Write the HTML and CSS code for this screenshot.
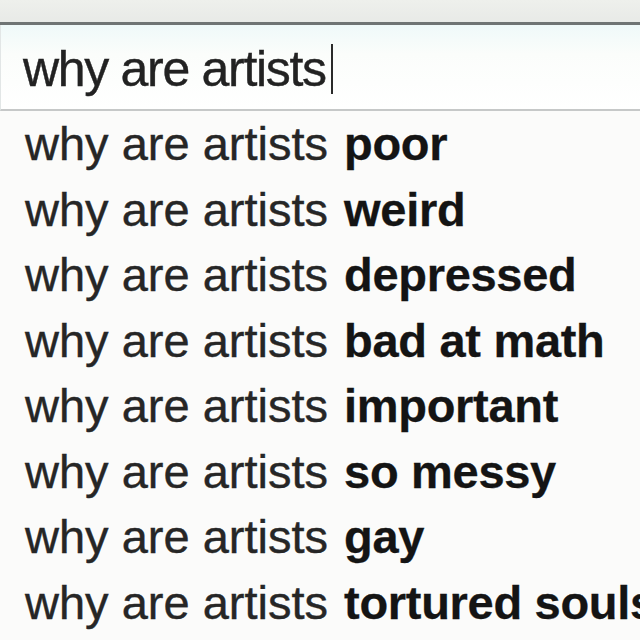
FILE: index.html
```html
<!DOCTYPE html>
<html lang="en">
<head>
    <meta charset="UTF-8">
    <meta name="viewport" content="width=device-width, initial-scale=1.0">
    <title>why are artists</title>
    <link rel="stylesheet" href="styles.css">
</head>
<body>
    <div class="toolbar"></div>

    <div class="search-box">
        <span class="query">why are artists</span><span class="caret"></span>
    </div>

    <ul class="suggestions">
        <li>why are artists <b>poor</b></li>
        <li>why are artists <b>weird</b></li>
        <li>why are artists <b>depressed</b></li>
        <li>why are artists <b>bad at math</b></li>
        <li>why are artists <b>important</b></li>
        <li>why are artists <b>so messy</b></li>
        <li>why are artists <b>gay</b></li>
        <li>why are artists <b>tortured souls</b></li>
    </ul>
</body>
</html>
```

FILE: styles.css
```css
body {
    margin: 0;
    width: 640px;
    height: 640px;
    overflow: hidden;
    background: #fbfbfa;
    font-family: "Liberation Sans", Arial, sans-serif;
    color: #252525;
}

.toolbar {
    height: 22px;
    background: linear-gradient(180deg, #eef0ec, #e8eae7);
    border-bottom: 3px solid #6f7474;
}

.search-box {
    height: 80px;
    padding-top: 4px;
    line-height: 80px;
    padding-left: 22px;
    border-left: 1px solid #e2e6e6;
    border-bottom: 2px solid #c6c8c8;
    background: linear-gradient(180deg, #eff9f9 0%, #fbfdfb 35%, #ffffff 100%);
    white-space: nowrap;
}

.query {
    font-size: 50px;
    letter-spacing: -1.3px;
    color: #222;
    -webkit-text-stroke: 0.4px #222;
}

.caret {
    display: inline-block;
    width: 2px;
    height: 50px;
    margin-left: 5px;
    background: #2a2a2a;
    vertical-align: -8px;
}

.suggestions {
    list-style: none;
    margin: 0;
    padding: 0 0 0 25px;
}

.suggestions li {
    font-size: 47px;
    line-height: 65.5px;
    white-space: nowrap;
    color: #262626;
    -webkit-text-stroke: 0.4px #262626;
}

.suggestions b {
    margin-left: 3px;
    letter-spacing: -0.3px;
    color: #141414;
    -webkit-text-stroke: 0.3px #141414;
}
```
